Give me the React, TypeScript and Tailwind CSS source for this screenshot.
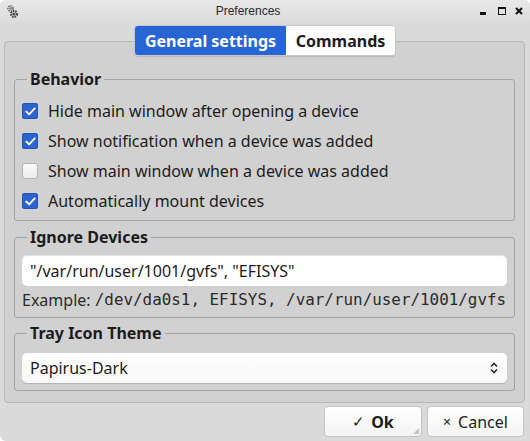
import React, { useState } from 'react';

const sans = { fontFamily: '"Noto Sans", "Open Sans", sans-serif' };

const CheckRow: React.FC<{ label: string; checked: boolean; onToggle: () => void }> = ({ label, checked, onToggle }) => (
  <label className="flex h-[30px] items-center gap-[10px] cursor-default" onClick={onToggle}>
    {checked ? (
      <span className="flex h-[16px] w-[16px] items-center justify-center rounded-[3px] bg-[#2b63cf] shadow-[inset_0_0_0_1px_#2454b4]">
        <svg width="11" height="9" viewBox="0 0 11 9" fill="none">
          <path d="M1.3 4.6 L4.1 7.3 L9.7 1.4" stroke="white" strokeWidth="1.9" strokeLinecap="round" strokeLinejoin="round" />
        </svg>
      </span>
    ) : (
      <span className="h-[16px] w-[16px] rounded-[3px] border border-[#b4b4b4] bg-gradient-to-b from-[#fafafa] to-[#ececec]" />
    )}
    <span className="text-[16px] text-[#1c1c1c]">{label}</span>
  </label>
);

const Group: React.FC<{ title: string; className?: string; children: React.ReactNode }> = ({ title, className, children }) => (
  <fieldset className={`rounded-[3px] border border-[#a3a3a3] px-[7px] ${className ?? ''}`}>
    <legend className="ml-[5px] px-[3px] text-[16px] font-bold leading-[22px] text-[#1c1c1c]">{title}</legend>
    {children}
  </fieldset>
);

export default function App() {
  const [checks, setChecks] = useState([true, true, false, true]);
  const labels = [
    'Hide main window after opening a device',
    'Show notification when a device was added',
    'Show main window when a device was added',
    'Automatically mount devices',
  ];

  return (
    <div className="flex h-[441px] w-[530px] flex-col overflow-hidden rounded-t-[6px] rounded-bl-[6px] bg-[#dadada]" style={sans}>
      {/* title bar */}
      <div className="flex h-[22px] items-center bg-gradient-to-b from-[#e8e8e8] to-[#dddddd]">
        <div className="w-[28px] pl-[7px]">
          <svg width="11" height="13" viewBox="0 0 11 13">
            <circle cx="3.5" cy="3.5" r="2.6" fill="none" stroke="#6a6a6a" strokeWidth="1.6" strokeDasharray="1.4 1" />
            <circle cx="3.5" cy="3.5" r="1.4" fill="#8a8a8a" />
            <circle cx="7" cy="9" r="3" fill="none" stroke="#3c3c3c" strokeWidth="2" strokeDasharray="1.5 1" />
            <circle cx="7" cy="9" r="1.6" fill="#505050" />
          </svg>
        </div>
        <div className="flex-1 text-center text-[12px] text-[#2a2a2a]" style={{ fontFamily: '"Liberation Sans", Arial, sans-serif' }}>
          Preferences
        </div>
        <div className="flex w-[62px] items-center pl-[12px]">
          <span className="mt-[4px] h-[3px] w-[6px] bg-[#111]" />
          <span className="ml-[12px] h-[8px] w-[8px] border-[1.5px] border-t-[2.5px] border-[#111]" />
          <svg className="ml-[9px]" width="8" height="8" viewBox="0 0 8 8">
            <path d="M1 1 L7 7 M7 1 L1 7" stroke="#111" strokeWidth="2" />
          </svg>
        </div>
      </div>

      {/* tabs */}
      <div className="relative z-10 mt-[3px] flex justify-center">
        <div className="flex h-[31px] overflow-hidden rounded-[4px] border border-[#c8c8c8] shadow-[0_1px_1px_rgba(0,0,0,0.12)]">
          <div className="flex w-[151px] items-center justify-center bg-[#2865d4] text-[16px] font-bold text-white">General settings</div>
          <div className="flex w-[109px] items-center justify-center bg-white text-[16px] font-bold text-[#1c1c1c]">Commands</div>
        </div>
      </div>

      {/* panel */}
      <div className="-mt-[15px] ml-[4px] mr-[5px] flex h-[362px] flex-col rounded-[4px] border border-[#b7b7b7] bg-[#d1d1d1] px-[9px] pt-[26px]">
        <Group title="Behavior" className="pb-[4px] pt-[6px]">
          {labels.map((l, i) => (
            <CheckRow
              key={l}
              label={l}
              checked={checks[i]}
              onToggle={() => setChecks(c => c.map((v, j) => (j === i ? !v : v)))}
            />
          ))}
        </Group>

        <Group title="Ignore Devices" className="mt-[5px] pb-[6px] pt-[7px]">
          <div className="flex h-[31px] items-center rounded-[5px] bg-white px-[8px] text-[16px] text-[#1c1c1c] shadow-[inset_0_1px_1px_rgba(0,0,0,0.12)]">
            "/var/run/user/1001/gvfs", "EFISYS"
          </div>
          <div className="mt-[3px] flex h-[22px] items-center whitespace-nowrap text-[16px] text-[#2a2a2a]">
            <span>Example:&nbsp;</span>
            <span className="text-[15.9px]" style={{ fontFamily: '"DejaVu Sans Mono", monospace' }}>
              /dev/da0s1, EFISYS, /var/run/user/1001/gvfs
            </span>
          </div>
        </Group>

        <Group title="Tray Icon Theme" className="mt-[4px] pb-[7px] pt-[9px]">
          <div className="flex h-[30px] items-center justify-between rounded-[5px] bg-gradient-to-b from-white to-[#f7f7f7] pl-[8px] pr-[9px] text-[16px] text-[#1c1c1c] shadow-[0_1px_1px_rgba(0,0,0,0.15)]">
            <span>Papirus-Dark</span>
            <svg width="8" height="12" viewBox="0 0 8 12" fill="none">
              <path d="M1 4.5 L4 1.5 L7 4.5 M1 7.5 L4 10.5 L7 7.5" stroke="#2a2a2a" strokeWidth="1.6" />
            </svg>
          </div>
        </Group>
      </div>

      {/* buttons */}
      <div className="mt-[3px] flex justify-end gap-[5px] pr-[6px]">
        <button className="relative flex h-[31px] w-[98px] items-center justify-center gap-[6px] rounded-[4px] border border-[#c4c4c4] bg-gradient-to-b from-white to-[#f4f4f4] text-[16px] font-bold text-[#1c1c1c]">
          <span className="font-normal text-[15px]">✓</span>
          <span>Ok</span>
          <span className="absolute bottom-[2px] right-[2px] h-0 w-0 border-b-[6px] border-l-[6px] border-b-[#c4c4c4] border-l-transparent" />
        </button>
        <button className="flex h-[31px] w-[97px] items-center justify-center gap-[7px] rounded-[4px] border border-[#c4c4c4] bg-gradient-to-b from-white to-[#f4f4f4] text-[16px] text-[#1c1c1c]">
          <span className="text-[14px]">×</span>
          <span>Cancel</span>
        </button>
      </div>
    </div>
  );
}
